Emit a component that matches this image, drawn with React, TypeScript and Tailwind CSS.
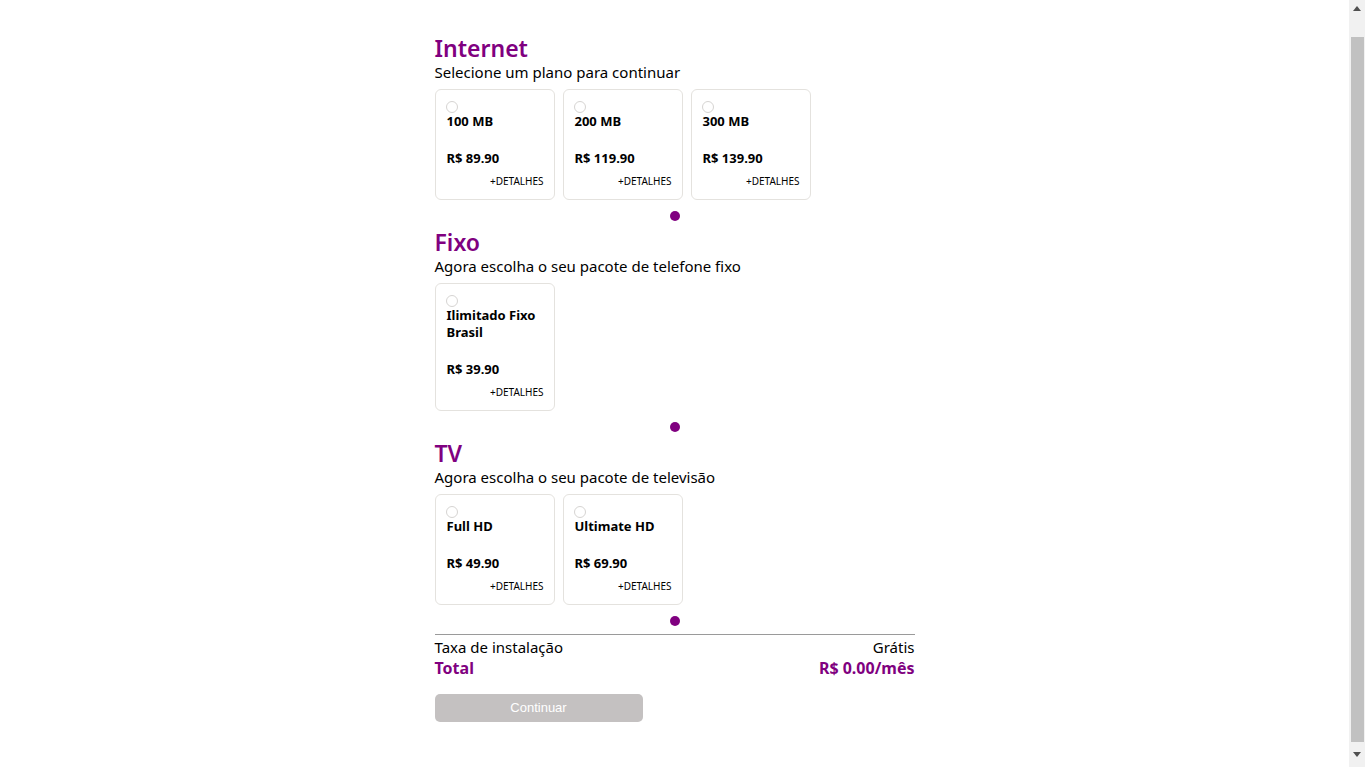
import React from "react";

const purple = "text-[#800080]";

type Plan = { name: string; price: string };

function Card({ plan }: { plan: Plan }) {
  return (
    <div className="w-[120px] rounded-[6px] border border-[#e4e2de] bg-white pl-[11px] pr-[10px] pt-[11px] pb-[11px]">
      <div className="-ml-[1px] h-[12px] w-[12px] rounded-full border border-[#d6d4d2] bg-white" />
      <div className="text-[13px] font-bold leading-[17px] text-black">{plan.name}</div>
      <div className="mt-[20px] text-[13px] font-bold leading-[17px] text-black">{plan.price}</div>
      <div className="mt-[8px] text-right text-[10px] leading-[13px] text-black">+DETALHES</div>
    </div>
  );
}

function Section({ title, subtitle, plans, first }: { title: string; subtitle: string; plans: Plan[]; first?: boolean }) {
  return (
    <section className={first ? "" : "mt-[7px]"}>
      <h2 className={`text-[23px] font-semibold leading-[28px] ${purple}`}>{title}</h2>
      <p className="text-[15px] leading-[20px] text-black">{subtitle}</p>
      <div className="mt-[7px] flex items-start gap-2">
        {plans.map((p) => (
          <Card key={p.name} plan={p} />
        ))}
      </div>
      <div className="mt-[11px] flex justify-center">
        <div className="h-[10px] w-[10px] rounded-full bg-[#800080]" />
      </div>
    </section>
  );
}

function Scrollbar() {
  return (
    <aside className="flex h-[767px] w-[16px] shrink-0 flex-col items-center bg-[#f1f1f1]">
      <div className="flex h-[17px] w-full items-center justify-center">
        <svg width="8" height="5" viewBox="0 0 8 5">
          <polygon points="0,5 8,5 4,0" fill="#505050" />
        </svg>
      </div>
      <div className="mt-[20px] ml-[1px] h-[705px] w-[13px] bg-[#c1c1c1]" />
      <div className="flex w-full flex-1 items-center justify-center">
        <svg width="8" height="5" viewBox="0 0 8 5">
          <polygon points="0,0 8,0 4,5" fill="#505050" />
        </svg>
      </div>
    </aside>
  );
}

export default function App() {
  return (
    <div className="flex h-[767px] overflow-hidden bg-white" style={{ fontFamily: '"Noto Sans", "Open Sans", sans-serif' }}>
      <main className="flex-1">
        <div className="mx-auto w-[480px] pt-[34px]">
          <Section
            first
            title="Internet"
            subtitle="Selecione um plano para continuar"
            plans={[
              { name: "100 MB", price: "R$ 89.90" },
              { name: "200 MB", price: "R$ 119.90" },
              { name: "300 MB", price: "R$ 139.90" },
            ]}
          />
          <Section
            title="Fixo"
            subtitle="Agora escolha o seu pacote de telefone fixo"
            plans={[{ name: "Ilimitado Fixo Brasil", price: "R$ 39.90" }]}
          />
          <Section
            title="TV"
            subtitle="Agora escolha o seu pacote de televisão"
            plans={[
              { name: "Full HD", price: "R$ 49.90" },
              { name: "Ultimate HD", price: "R$ 69.90" },
            ]}
          />
          <div className="mt-[8px] border-t border-[#9a9a9a]" />
          <div className="mt-[1px] flex justify-between text-[15px] leading-[22px] text-black">
            <span>Taxa de instalação</span>
            <span>Grátis</span>
          </div>
          <div className={`flex justify-between text-[16px] font-bold leading-[20px] ${purple}`}>
            <span>Total</span>
            <span>R$ 0.00/mês</span>
          </div>
          <button
            className="mt-[16px] h-[28px] w-[208px] rounded-[5px] bg-[#c4c1c1] text-[13px] text-white"
            style={{ fontFamily: '"Liberation Sans", Arial, sans-serif' }}
          >
            Continuar
          </button>
        </div>
      </main>
      <Scrollbar />
    </div>
  );
}
